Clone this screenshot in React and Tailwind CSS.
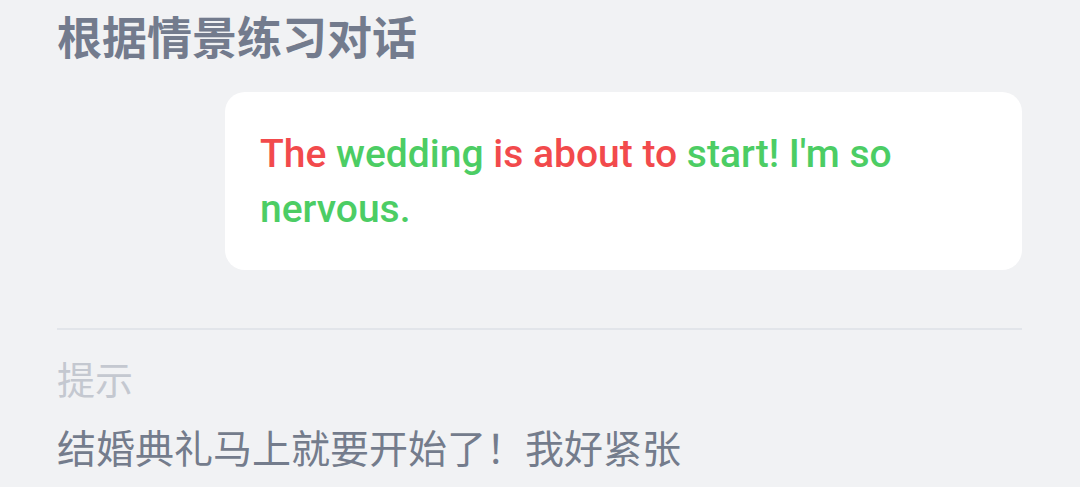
export default function App() {
  const words = [
    { t: 'The', c: 'red' },
    { t: 'wedding', c: 'green' },
    { t: 'is', c: 'red' },
    { t: 'about', c: 'red' },
    { t: 'to', c: 'red' },
    { t: 'start!', c: 'green' },
    { t: "I'm", c: 'green' },
    { t: 'so', c: 'green' },
    { t: 'nervous.', c: 'green' },
  ]

  return (
    <div className="min-h-screen w-full bg-[#f1f2f4] pl-[57px] pr-[58px] font-['Noto_Sans_CJK_SC',sans-serif]">
      <h1 className="text-[45px] font-bold leading-[72px] text-[#737b8d]">根据情景练习对话</h1>

      <div className="ml-[168px] mt-5 rounded-[20px] bg-white pb-[33px] pl-[35px] pr-[35px] pt-[35px]">
        <p className="font-['Roboto',sans-serif] text-[39px] font-medium leading-[55px]">
          {words.map((w, i) => (
            <span key={i} className={w.c === 'red' ? 'text-[#f24a4c]' : 'text-[#4ccd64]'}>
              {w.t}
              {i < words.length - 1 ? ' ' : ''}
            </span>
          ))}
        </p>
      </div>

      <div className="mt-[58px] h-[2px] bg-[#e2e5ea]" />

      <div className="pt-5">
        <p className="text-[38px] leading-[56px] text-[#c4c8d0]">提示</p>
        <p className="mt-3 text-[39px] leading-[56px] text-[#747c8c]">结婚典礼马上就要开始了！我好紧张</p>
      </div>
    </div>
  )
}
